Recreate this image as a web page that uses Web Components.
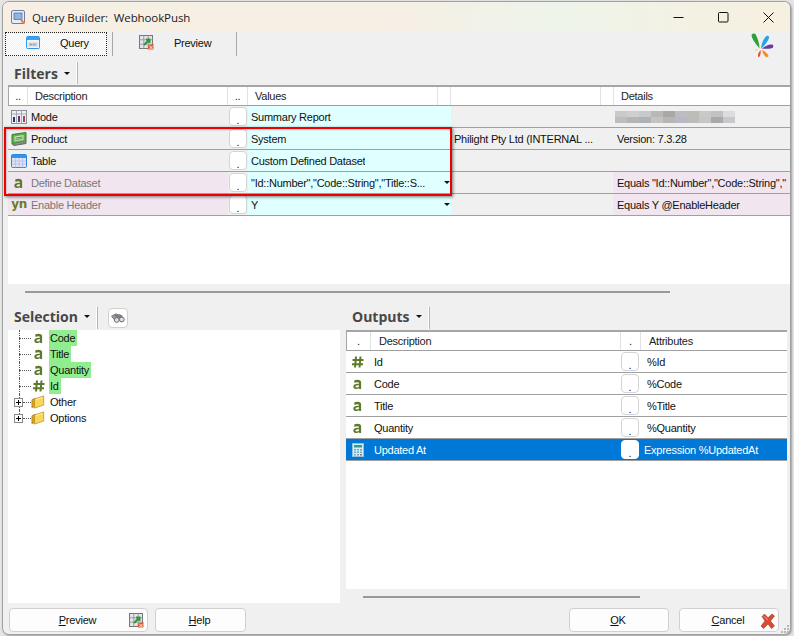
<!DOCTYPE html>
<html>
<head>
<meta charset="utf-8">
<title>Query Builder</title>
<style>
  html, body { margin: 0; padding: 0; background: #e4e4e4; }
  body { width: 794px; height: 636px; overflow: hidden; font: 11px "Liberation Sans", Arial, sans-serif; color: #111; }
</style>
</head>
<body>

<qb-window>
  <qb-titlebar slot="title" label="Query Builder:  WebhookPush"></qb-titlebar>
  <qb-tabs slot="tabs"></qb-tabs>

  <qb-panel-head slot="filters-head" label="Filters"></qb-panel-head>
  <qb-filters slot="filters"></qb-filters>
  <qb-scroll slot="filters-scroll" left="17" width="645" top="7" h="22"></qb-scroll>

  <qb-panel-head slot="selection-head" label="Selection" tool lift></qb-panel-head>
  <qb-tree slot="selection"></qb-tree>

  <qb-panel-head slot="outputs-head" label="Outputs" lift></qb-panel-head>
  <qb-outputs slot="outputs"></qb-outputs>
  <qb-scroll slot="outputs-scroll" left="17" width="277" top="7" h="15"></qb-scroll>

  <qb-button slot="left" w="139" key="P" rest="review" icon="grid"></qb-button>
  <qb-button slot="left" w="91" key="H" rest="elp"></qb-button>
  <qb-button slot="right" w="100" key="O" rest="K"></qb-button>
  <qb-button slot="right" w="100" key="C" rest="ancel" icon="cross"></qb-button>
</qb-window>

<script>
// shared glyphs, all drawn at 16x16 unless the caller sizes them
const ICONS = {
  a: `<svg width="14" height="14" viewBox="0 0 14 14"><path d="M3.2 3.6c2-1.2 6.6-1.3 6.9 1.5V12H8.2l-.2-1c-1.400 1.500-5.600 1.600-5.700-1.300C2.300 7 5.700 6.700 8 6.700c.1-1.800-2.500-1.700-4.500-.8zM8 8.200c-1.500 0-3.600.1-3.600 1.400 0 1.300 2.800 1 3.600-.2z" fill="#5c7a2a"/></svg>`,
  hash: `<svg width="14" height="14" viewBox="0 0 14 14"><path d="M5 1.500 4 12.500M9.500 1.500l-1 11M1.500 5h11M1 9.200h11" stroke="#5c7a2a" stroke-width="2" fill="none"/></svg>`,
  yn: `<span style="font:700 12px 'DejaVu Sans',sans-serif;color:#6a7a24;letter-spacing:-.5px;line-height:12px;display:block;margin-top:-2px">yn</span>`,
  mode: `<svg width="16" height="16" viewBox="0 0 16 16"><rect x=".5" y="1.500" width="15" height="13" fill="#eef0f6" stroke="#8b8f9c"/><path d="M.5 5h15M5.500 1.500v13M10.500 1.500v13" stroke="#a4a8b4"/><path d="M2 8h2v5H2z" fill="#26356e"/><path d="M7 7h2v6H7z" fill="#5b3c70"/><path d="M12 7h2v6h-2z" fill="#b43c50"/></svg>`,
  product: `<svg width="16" height="16" viewBox="0 0 16 16"><path d="M1 3.500 15 1.500v9L1 13z" fill="#5fb04a" stroke="#3f7a35"/><path d="M3.500 5.500l9-1.500v5l-9 1.300z" fill="#c8e6bc"/><path d="M4.500 7l7-1M4.500 8.500l7-1" stroke="#5d8f4f"/><path d="M1 13l2 1.500 12-2v-2" fill="#8a8f86" stroke="#666"/></svg>`,
  table: `<svg width="16" height="16" viewBox="0 0 16 16"><rect x=".5" y="1.500" width="15" height="13" rx="1" fill="#dfe3f6" stroke="#2f86e0"/><rect x="1" y="2" width="14" height="3" fill="#2f96ee"/><path d="M4.500 5.500v9M8 5.500v9M11.500 5.500v9M1 8h14M1 11h14" stroke="#b6bcdf" stroke-width=".8"/></svg>`,
  calc: `<svg width="16" height="16" viewBox="0 0 16 16"><rect x="2.500" y="1.500" width="11" height="13" fill="#d8eef8" stroke="#8fc0dc"/><rect x="4" y="3" width="8" height="2.500" fill="#2f9f8c"/><path d="M4 7h2v1.500H4zM7 7h2v1.500H7zM10 7h2v1.500h-2zM4 9.500h2V11H4zM7 9.500h2V11H7zM10 9.500h2V11h-2zM4 12h2v1.500H4zM7 12h2v1.500H7z" fill="#6aa8c4"/><path d="M10 12h2v1.500h-2z" fill="#d05a4a"/></svg>`,
  grid: `<svg width="16" height="16" viewBox="0 0 16 16"><rect x=".5" y=".5" width="13" height="13" fill="#e4e4ea" stroke="#777"/><path d="M4.800 .5v13M9.200 .5v13M.5 4.800h13M.5 9.200h13" stroke="#9a9aa4"/><path d="M5 10 10 5M7 4.500h3.500V8" stroke="#2f9a35" stroke-width="2" fill="none"/><path d="M9 10.500l5.500-1.500v5.500H9z" fill="#ea5a2a"/><path d="M10.500 11l3 3M13.500 11l-3 3" stroke="#fff" stroke-width=".8"/></svg>`,
  query: `<svg width="16" height="16" viewBox="0 0 16 16"><rect x=".5" y="1.500" width="13" height="12" rx="1" fill="#eef3fa" stroke="#2f96ee"/><rect x="1" y="2" width="12" height="3" fill="#3aa0f0"/><rect x="2.500" y="7.500" width="9" height="4" fill="#c8ccd6"/><path d="M4 9.500h1.800M7.500 9.500h1.800" stroke="#8a8f9c"/></svg>`,
  cross: `<svg width="16" height="16" viewBox="0 0 16 16"><path d="M2 3.500 4.500 1 8 4.800 12 1l2.500 2L10.500 8l4 5-3 2.500L8 11l-4.500 4.500L1 13l4-5z" fill="#dc4a32" stroke="#9a3a28" stroke-width=".6"/><path d="M3.500 3 8 7" stroke="#f4a08c"/></svg>`,
  folder: `<svg width="14" height="14" viewBox="0 0 16 16"><path d="M1 5.500 5 3.500v9.500l-4 1.500z" fill="#d89f1e" stroke="#a87a18" stroke-width=".7"/><path d="M4 4.500 14.500 1v10.500L4 15z" fill="#f6d75c" stroke="#b98c1e" stroke-width=".8"/><path d="M5.500 5.500l7.500-2.500" stroke="#fff2b0"/></svg>`,
  bino: `<svg width="14" height="11" viewBox="0 0 14 11"><path d="M.5 3 5 .8 8 2.500 7 5.500 3 6.500z" fill="#9a9a9e" stroke="#66686c" stroke-width=".7"/><path d="M4 2.500 8.500 1.500 11.500 3 9.500 5.500z" fill="#808286" stroke="#66686c" stroke-width=".6"/><circle cx="5.800" cy="7" r="2.400" fill="#dfe2e6" stroke="#66686c"/><circle cx="10.800" cy="6.500" r="2.400" fill="#dfe2e6" stroke="#66686c"/></svg>`,
};

const define = (name, cls) => { if (!customElements.get(name)) customElements.define(name, cls); };

// outer frame: named slots for every region
class QbWindow extends HTMLElement {
  constructor() {
    super();
    this.attachShadow({ mode: 'open' }).innerHTML = `
      <style>
        :host { display: block; width: 789px; height: 634px; margin: 1px 0 0 2px; background: #f0f0f0;
          border: 1px solid #a0a0a0; border-radius: 7px; box-sizing: border-box; position: relative; overflow: hidden;
          box-shadow: 1px 1px 2px rgba(0,0,0,.3); }
        .body { display: flex; flex-direction: column; height: 602px; padding-left: 5px; box-sizing: border-box; }
        .mid { display: flex; gap: 6px; flex: 1; min-height: 0; }
        .col { display: flex; flex-direction: column; }
        .sel { width: 332px; }
        .out { width: 441px; }
        .foot { display: flex; justify-content: space-between; padding: 4px 11px 0 1px; height: 30px; box-sizing: border-box; flex: none; }
        .foot div { display: flex; gap: 7px; }
        .foot .r { gap: 10px; }
        .logo { position: absolute; left: 747px; top: 31px; }
        .grip { position: absolute; right: 1px; bottom: 1px; }
      </style>
      <slot name="title"></slot>
      <div class="body">
        <slot name="tabs"></slot>
        <slot name="filters-head"></slot>
        <slot name="filters"></slot>
        <slot name="filters-scroll"></slot>
        <div class="mid">
          <div class="col sel"><slot name="selection-head"></slot><slot name="selection"></slot></div>
          <div class="col out"><slot name="outputs-head"></slot><slot name="outputs"></slot><slot name="outputs-scroll"></slot></div>
        </div>
        <div class="foot"><div><slot name="left"></slot></div><div class="r"><slot name="right"></slot></div></div>
      </div>
      <svg class="logo" width="24" height="25" viewBox="0 0 24 25">
        <path d="M9.500 15.500C6 11 2 6.500 1.500 2 2 .5 4.500 0 5.500 1c2 4 4 9 4 14.500z" fill="#2fa035"/>
        <path d="M11 15.500c.5-5.500 3-10.500 5.500-12.500 1.500-.5 3 .5 2.500 2-1.500 4-4.500 8-8 10.500z" fill="#25a5e8"/>
        <path d="M12 15.500c3-2.500 7-4.500 10.500-4 1 .5 1 3 0 3.500-3.500 1-7.500 1-10.500.5z" fill="#6a3aa8"/>
        <path d="M12 17c3 1 6 4 6.500 6 0 1-1.500 1.500-2.500 1-2-1.500-3.500-4-4-7z" fill="#f0902a"/>
        <path d="M10.500 17c.5 2.500 0 5-1 6.500-.5 1-2 .5-1.500-1 0-1.500 1-3.500 2.500-5.500z" fill="#e8453a"/>
        <path d="M9 16.500c-1.500 1-3 1.500-4 1-.5-.5 0-1.500 1-1.500s2 0 3 .5z" fill="#f7e24a"/>
      </svg>
      <svg class="grip" width="8" height="8" viewBox="0 0 8 8" fill="#b8b8b8"><path d="M6 0h2v2H6zM3 3h2v2H3zM6 3h2v2H6zM0 6h2v2H0zM3 6h2v2H3zM6 6h2v2H6z"/></svg>
      <qb-highlight></qb-highlight>`;
  }
}
define('qb-window', QbWindow);

// the red annotation drawn on the screenshot, lies over the grid
class QbHighlight extends HTMLElement {
  constructor() {
    super();
    this.attachShadow({ mode: 'open' }).innerHTML = `
      <style>
        :host { position: absolute; left: 1px; top: 125px; width: 448px; height: 69px; box-sizing: border-box;
          border: 2px solid #ee0000; box-shadow: 1px 1px 3px rgba(0,0,0,.5), inset 1px 1px 2px rgba(0,0,0,.2); pointer-events: none; }
      </style>`;
  }
}
define('qb-highlight', QbHighlight);

class QbTitlebar extends HTMLElement {
  constructor() {
    super();
    this.attachShadow({ mode: 'open' }).innerHTML = `
      <style>
        :host { display: flex; align-items: center; height: 30px; box-sizing: border-box; padding-left: 8px;
          background: linear-gradient(90deg, #f7efe4 0%, #f6efe5 50%, #eef4ea 70%, #f4f1e2 90%, #f6f0e0 100%);
          font: 11.5px "Open Sans", sans-serif; letter-spacing: -.1px; color: #1a1a1a; }
        .ico { display: flex; margin-right: 6px; }
        .t { flex: 1; white-space: pre; }
        .b { width: 45px; height: 30px; display: flex; align-items: center; justify-content: center; }
      </style>
      <span class="ico"><svg width="15" height="15" viewBox="0 0 15 15"><rect x=".5" y=".5" width="13" height="13" rx="1.500" fill="#e8ecf8" stroke="#6f7f9f"/><rect x="3" y="3" width="8" height="6.500" fill="#8fb4e0" stroke="#486890" stroke-width=".7"/><path d="M10 10l3.500 3.500" stroke="#e8813a" stroke-width="2"/></svg></span>
      <span class="t"></span>
      <span class="b"><svg width="11" height="11"><path d="M.5 5.500h10" stroke="#111"/></svg></span>
      <span class="b"><svg width="11" height="11"><rect x=".5" y=".5" width="9.500" height="9.500" rx="1" fill="none" stroke="#111"/></svg></span>
      <span class="b" style="margin-right:-1px"><svg width="11" height="11"><path d="M.5 .5l10 10M10.500 .5l-10 10" stroke="#111"/></svg></span>`;
    this.shadowRoot.querySelector('.t').textContent = this.getAttribute('label');
  }
}
define('qb-titlebar', QbTitlebar);

class QbTabs extends HTMLElement {
  constructor() {
    super();
    this.attachShadow({ mode: 'open' }).innerHTML = `
      <style>
        :host { display: flex; height: 25px; flex: none; box-sizing: border-box; margin: 0 0 4px -3px; font: 11px "Liberation Sans", sans-serif; letter-spacing: -.25px; color: #111; }
        .tab { display: flex; align-items: center; box-sizing: border-box; height: 24px; padding-bottom: 3px; white-space: nowrap; }
        .on { width: 102px; background: repeating-conic-gradient(#fff 0 25%, #f0f0f0 0 50%) 0 0 / 2px 2px; border: 1px dotted #222; margin-right: 5px; padding-left: 20px; padding-bottom: 2px; }
        .sep { border-left: 1px solid #a8a8a8; border-right: 1px solid #a8a8a8; width: 125px; padding-left: 26px; }
        .on .lb { margin-left: 18px; }
        .sep .lb { margin-left: 19px; }
      </style>
      <div class="tab on">${ICONS.query}<span class="lb">Query</span></div>
      <div class="tab sep">${ICONS.grid}<span class="lb">Preview</span></div>`;
  }
}
define('qb-tabs', QbTabs);

class QbPanelHead extends HTMLElement {
  constructor() {
    super();
    const tool = this.hasAttribute('tool');
    const lift = this.hasAttribute('lift') ? 'margin-bottom: 4px;' : '';
    this.attachShadow({ mode: 'open' }).innerHTML = `
      <style>
        :host { display: flex; align-items: center; height: 24px; flex: none; box-sizing: border-box; }
        .t { font: 700 14px "Open Sans", sans-serif; color: #474747; padding-left: 6px; ${lift} }
        .c { width: 0; height: 0; border: 3px solid transparent; border-top: 3px solid #111; margin: 3px 6px ${lift ? '4px' : '0'} 6px; }
        .s { width: 1px; height: 22px; background: #b4b4b4; border-left: 1px solid #fff; }
        .tool { width: 20px; height: 20px; margin-left: 10px; box-sizing: border-box; background: #fff; border: 1px solid #d0d0d0; border-radius: 4px; display: flex; align-items: center; justify-content: center; }
      </style>
      <span class="t">${this.getAttribute('label')}</span><i class="c"></i><i class="s"></i>
      ${tool ? `<span class="tool">${ICONS.bino}</span>` : ''}`;
  }
}
define('qb-panel-head', QbPanelHead);

// the thin scroll thumb that sits under each grid
class QbScroll extends HTMLElement {
  constructor() {
    super();
    const a = n => this.getAttribute(n);
    this.attachShadow({ mode: 'open' }).innerHTML = `
      <style>
        :host { display: block; flex: none; height: ${a('h')}px; box-sizing: border-box; padding: ${a('top')}px 0 0 ${a('left')}px; }
        div { width: ${a('width')}px; height: 2px; background: #999; }
      </style><div></div>`;
  }
}
define('qb-scroll', QbScroll);

// grid rows for both tables share these rules
const ROW_CSS = `
  .row { display: grid; height: 22px; box-sizing: border-box; border-bottom: 1px solid #a0a0a0; white-space: nowrap; font: 11px "Liberation Sans", sans-serif; letter-spacing: -.25px; color: #111; }
  .row > * { display: flex; align-items: center; min-width: 0; overflow: hidden; box-sizing: border-box; }
  .head { height: 21px; background: #fff; border-top: 2px solid #a6a6a6; border-left: 1px solid #a6a6a6; color: #222; }
  .head > * + * { border-left: 1px solid #e2e2e2; }
  .dots { justify-content: center; }
  .ic { width: 16px; flex: none; justify-content: center; display: flex; }
  .btn { justify-content: center; padding-top: 6px; background: #fff; border: 1px solid #d4d4d4; border-radius: 4px; margin: 1px; height: 19px; color: #111; }
`;

class QbFilters extends HTMLElement {
  constructor() {
    super();
    const rows = [
      { ic: 'mode', d: 'Mode', v: 'Summary Report', x: '', blur: true },
      { ic: 'product', d: 'Product', v: 'System', x: 'Philight Pty Ltd (INTERNAL ...', e: 'Version: 7.3.28' },
      { ic: 'table', d: 'Table', v: 'Custom Defined Dataset' },
      { ic: 'a', d: 'Define Dataset', v: '"Id::Number","Code::String","Title::S...', off: true, drop: true, e: 'Equals "Id::Number","Code::String","' },
      { ic: 'yn', d: 'Enable Header', v: 'Y', off: true, drop: true, e: 'Equals Y @EnableHeader' },
    ];
    const html = rows.map(r => `
      <div class="row c ${r.off ? 'off' : ''}">
        <div class="desc"><span class="ic">${ICONS[r.ic]}</span>${r.d}</div>
        <div class="btn">.</div>
        <div class="val"><span class="vt">${r.v}</span>${r.drop ? '<i class="dd"></i>' : ''}</div>
        <div class="x">${r.x || ''}</div>
        <div class="det">${r.blur ? '<span class="blur"></span>' : (r.e || '')}</div>
      </div>`).join('');
    const blur = ['#c9c9c9','#cfcfcf','#c6caca','#b8b8b8','#a9a8a5','#bcbdc2','#bcbcb8','#c9c9c9','#c2c2c6','#dcdcdc',
      '#bdbdbd','#b5b5b5','#aeb2b4','#c6c2c0','#b6b6b6','#b8b8c0','#bcbcbc','#c6c6c6','#a9a9a9','#c8c8cc'].map(c => `<b style="background:${c}"></b>`).join('');
    this.attachShadow({ mode: 'open' }).innerHTML = `
      <style>
        :host { display: block; height: 199px; flex: none; background: #fff; }
        ${ROW_CSS}
        .head { grid-template-columns: 18px 200px 20px 190px 13px 150px 13px 1fr; }
        .c { grid-template-columns: 220px 20px 203px 162px 1fr; background: #f0f0f0; }
        .head .lab { padding-left: 7px; }
        .desc { padding-left: 3px; }
        .desc .ic { margin-right: 4px; }
        .val { background: #e0ffff; padding-left: 3px; justify-content: space-between; }
        .vt { overflow: hidden; }
        .x { padding-left: 3px; }
        .det { padding-left: 4px; }
        .off .desc { background: #f1e6f0; color: #777; }
        .off .det { background: #f1e6f0; }
        .dd { flex: none; width: 0; height: 0; border: 3px solid transparent; border-top: 3px solid #111; margin: 3px 1px 0 0; }
        .blur { display: grid; grid-template-columns: repeat(10, 12px); grid-auto-rows: 6px; width: 120px; height: 12px; margin-left: -2px; filter: blur(.5px); }
        .blur b { display: block; }
      </style>
      <div class="row head">
        <div class="dots">..</div><div class="lab">Description</div><div class="dots">..</div><div class="lab">Values</div><div></div><div></div><div></div><div class="lab">Details</div>
      </div>
      ${html}`;
    this.shadowRoot.querySelector('.blur').innerHTML = blur;
  }
}
define('qb-filters', QbFilters);

class QbTree extends HTMLElement {
  constructor() {
    super();
    const leaf = [['a', 'Code'], ['a', 'Title'], ['a', 'Quantity'], ['hash', 'Id']];
    const fold = ['Other', 'Options'];
    this.attachShadow({ mode: 'open' }).innerHTML = `
      <style>
        :host { display: block; flex: 1; background: #fff; padding-left: 11px; font: 11px "Liberation Sans", sans-serif; letter-spacing: -.25px; color: #111; margin-bottom: 1px; }
        .n { display: flex; align-items: center; height: 16px; position: relative; padding-left: 30px; }
        .n::before { content: ""; position: absolute; left: 0; width: 12px; top: 8px; border-top: 1px dotted #555; }
        .n::after { content: ""; position: absolute; left: 0; top: 0; height: 16px; border-left: 1px dotted #555; }
        .n:first-child::after { top: 8px; height: 8px; }
        .n:last-child::after { height: 8px; }
        .i { position: absolute; left: 13px; top: 1px; }
        .hl { background: #90ee90; padding: 0 2px 0 1px; height: 16px; line-height: 16px; }
        .p { padding-left: 1px; }
        .box { position: absolute; left: -5px; top: 4px; width: 9px; height: 9px; box-sizing: border-box; border: 1px solid #888; background: linear-gradient(#000,#000) center/5px 1px no-repeat, linear-gradient(#000,#000) center/1px 5px no-repeat, #fff; z-index: 1; }
        .n.f::before { left: 4px; width: 8px; }
        .n.f .i { left: 12px; }
      </style>
      ${leaf.map(([i, t]) => `<div class="n"><span class="i">${ICONS[i]}</span><span class="hl">${t}</span></div>`).join('')}
      ${fold.map(t => `<div class="n f"><span class="box"></span><span class="i">${ICONS.folder}</span><span class="p">${t}</span></div>`).join('')}`;
  }
}
define('qb-tree', QbTree);

class QbOutputs extends HTMLElement {
  constructor() {
    super();
    const rows = [['hash', 'Id', '%Id'], ['a', 'Code', '%Code'], ['a', 'Title', '%Title'], ['a', 'Quantity', '%Quantity'], ['calc', 'Updated At', 'Expression %UpdatedAt', true]];
    this.attachShadow({ mode: 'open' }).innerHTML = `
      <style>
        :host { display: block; flex: none; height: 259px; background: #fff; }
        ${ROW_CSS}
        .head { grid-template-columns: 23px 250px 20px 1fr; }
        .row:not(.head) { grid-template-columns: 274px 20px 1fr; }
        .head .lab { padding-left: 8px; }
        .desc { padding-left: 4px; }
        .desc .ic { margin-right: 8px; }
        .attr { padding-left: 7px; }
        .sel { background: #0078d7; color: #fff; }
        .sel .btn { border-color: #fff; }
        .sel .attr { padding-left: 4px; }
      </style>
      <div class="row head"><div class="dots">.</div><div class="lab">Description</div><div class="dots">.</div><div class="lab">Attributes</div></div>
      ${rows.map(([i, d, a, s]) => `<div class="row ${s ? 'sel' : ''}"><div class="desc"><span class="ic">${ICONS[i]}</span>${d}</div><div class="btn">.</div><div class="attr">${a}</div></div>`).join('')}`;
  }
}
define('qb-outputs', QbOutputs);

class QbButton extends HTMLElement {
  constructor() {
    super();
    const ic = this.getAttribute('icon');
    this.attachShadow({ mode: 'open' }).innerHTML = `
      <style>
        :host { display: flex; align-items: center; justify-content: center; position: relative; box-sizing: border-box; height: 24px; padding-right: 2px;
          width: ${this.getAttribute('w')}px; background: #fdfdfd; border: 1px solid #d0d0d0; border-radius: 4px; font: 11px "Liberation Sans", sans-serif; letter-spacing: -.2px; color: #111; }
        u { text-underline-offset: 1px; }
        .i { position: absolute; right: 2px; top: 4px; display: flex; }
      </style>
      <span><u>${this.getAttribute('key')}</u>${this.getAttribute('rest')}</span>
      ${ic ? `<span class="i">${ICONS[ic]}</span>` : ''}`;
  }
}
define('qb-button', QbButton);
</script>
</body>
</html>
